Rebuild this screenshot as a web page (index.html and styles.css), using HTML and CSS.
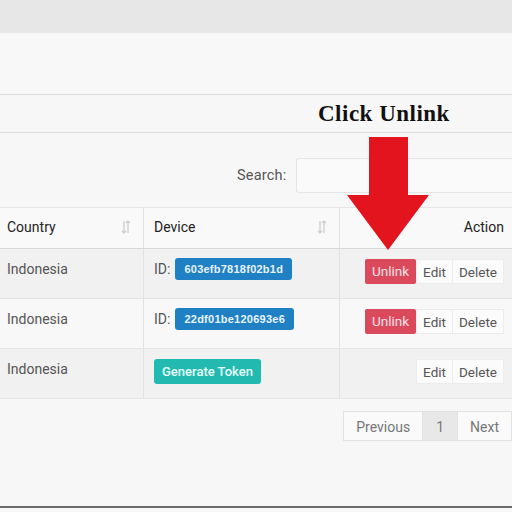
FILE: index.html
```html
<!DOCTYPE html>
<html>
<head>
<meta charset="utf-8">
<link rel="stylesheet" href="styles.css">
</head>
<body>
<div class="topbar"></div>
<div class="panel"></div>
<div class="caption"><span class="caption-text">Click Unlink</span></div>
<div class="search-row">
  <label class="search-label">Search:</label>
  <div class="search-input"></div>
</div>
<table class="grid">
  <thead>
    <tr>
      <th class="col-country"><div class="th-inner">Country <svg class="sort" viewBox="0 0 10 14" width="10" height="14"><path d="M3 1v12M1 11l2 2 2-2M7 13V1M5 3l2-2 2 2" fill="none" stroke="#d0d0d0" stroke-width="1.4"/></svg></div></th>
      <th class="col-device"><div class="th-inner">Device <svg class="sort" viewBox="0 0 10 14" width="10" height="14"><path d="M3 1v12M1 11l2 2 2-2M7 13V1M5 3l2-2 2 2" fill="none" stroke="#d0d0d0" stroke-width="1.4"/></svg></div></th>
      <th class="col-action"><div class="th-action">Action</div></th>
    </tr>
  </thead>
  <tbody>
    <tr class="odd">
      <td>Indonesia</td>
      <td><span class="id-label">ID:</span><span class="badge">603efb7818f02b1d</span></td>
      <td class="actions"><div class="btns"><span class="btn btn-red">Unlink</span><span class="btn-group"><span class="btn btn-light">Edit</span><span class="btn btn-light">Delete</span></span></div></td>
    </tr>
    <tr class="even">
      <td>Indonesia</td>
      <td><span class="id-label">ID:</span><span class="badge">22df01be120693e6</span></td>
      <td class="actions"><div class="btns"><span class="btn btn-red">Unlink</span><span class="btn-group"><span class="btn btn-light">Edit</span><span class="btn btn-light">Delete</span></span></div></td>
    </tr>
    <tr class="odd">
      <td>Indonesia</td>
      <td><span class="btn-teal">Generate Token</span></td>
      <td class="actions"><div class="btns"><span class="btn-group"><span class="btn btn-light">Edit</span><span class="btn btn-light">Delete</span></span></div></td>
    </tr>
  </tbody>
</table>
<div class="pager">
  <span class="page">Previous</span><span class="page page-current">1</span><span class="page">Next</span>
</div>
<div class="footer-line"></div>
<svg class="arrow" viewBox="0 0 82 113" width="82" height="113"><polygon points="22,0 61,0 61,58 82,58 41,113 0,58 22,58" fill="#e3141e"/></svg>
</body>
</html>
```
FILE: styles.css
```css
html, body {
  margin: 0;
  padding: 0;
}
body {
  width: 512px;
  height: 512px;
  overflow: hidden;
  background: #f7f7f7;
  font-family: Roboto, "Liberation Sans", sans-serif;
  color: #444;
  position: relative;
}
.topbar {
  height: 33px;
  background: #e7e7e7;
}
.panel {
  height: 61px;
  background: #f8f8f8;
  border-bottom: 1px solid #dcdcdc;
}
.caption {
  height: 37px;
  border-bottom: 1px solid #dcdcdc;
  display: flex;
  align-items: center;
  padding-left: 318px;
}
.caption-text {
  font-family: "Liberation Serif", "DejaVu Serif", serif;
  font-weight: bold;
  font-size: 23px;
  letter-spacing: 0.5px;
  color: #111;
  margin-top: 1px;
}
.search-row {
  height: 74px;
  display: flex;
  align-items: flex-start;
  padding-top: 25px;
  box-sizing: border-box;
}
.search-label {
  margin-left: 237px;
  width: 59px;
  line-height: 35px;
  font-size: 14.5px;
  letter-spacing: 0.2px;
  color: #555;
}
.search-input {
  flex: 1;
  height: 33px;
  background: #fafafa;
  border: 1px solid #e4e4e4;
  border-right: none;
  border-radius: 3px 0 0 3px;
}
.grid {
  width: 512px;
  border-collapse: collapse;
  font-size: 14px;
}
.grid th {
  height: 40px;
  padding: 0;
  background: #f9f9f9;
  font-weight: 400;
  color: #222;
  text-align: left;
  border-bottom: 1px solid #d8d8d8;
  border-top: 1px solid #e6e6e6;
}
.col-country { width: 143px; border-right: 1px solid #e2e2e2; }
.col-device { width: 195px; border-right: 1px solid #e2e2e2; }
.th-inner {
  display: flex;
  justify-content: space-between;
  align-items: center;
  padding: 0 12px 0 7px;
  margin-top: -2px;
}
.col-device .th-inner { padding-left: 10px; }
.sort { display: block; }
.th-action {
  text-align: right;
  padding-right: 8px;
  margin-top: -2px;
}
.grid td {
  height: 50px;
  padding: 9px 0 0 7px;
  box-sizing: border-box;
  vertical-align: top;
  color: #555;
  line-height: 22px;
  border-bottom: 1px solid #e4e4e4;
}
.grid td + td { border-left: 1px solid #e2e2e2; padding-left: 10px; }
.grid tr.odd td { background: #f1f1f1; }
.grid tr.even td { background: #f8f8f8; }
.id-label {
  color: #555;
  margin-right: 5px;
}
.badge {
  display: inline-block;
  height: 22px;
  line-height: 22px;
  padding: 0 9px;
  background: #1f80c4;
  color: #e8f4ff;
  font-family: "Liberation Sans", Arial, sans-serif;
  font-weight: bold;
  font-size: 11px;
  letter-spacing: 0.25px;
  border-radius: 3px;
  vertical-align: top;
}
.btn-teal {
  display: inline-block;
  height: 25px;
  line-height: 25px;
  padding: 0 8px;
  background: #22bab0;
  color: #e9fffb;
  font-size: 13px;
  font-weight: 500;
  border-radius: 3px;
  margin-top: 1px;
}
.grid td.actions { padding-right: 8px; padding-left: 0; }
.btns {
  display: flex;
  justify-content: flex-end;
  align-items: center;
  margin-top: 1px;
}
.btn {
  display: inline-block;
  height: 25px;
  line-height: 25px;
  font-size: 13.5px;
  padding: 0 6px;
  box-sizing: border-box;
}
.btn-red {
  background: #db4a5c;
  color: #ffe3e7;
  border-radius: 2px;
  width: 51px;
  text-align: center;
}
.btn-group {
  display: flex;
  background: #fbfbfb;
}
.btn-light {
  color: #555;
  border: 1px solid #ececec;
}
.btn-light + .btn-light { border-left: none; }
.pager {
  display: flex;
  justify-content: flex-end;
  margin-top: 12px;
  height: 30px;
}
.page {
  height: 30px;
  line-height: 30px;
  box-sizing: border-box;
  border: 1px solid #e2e2e2;
  background: #fafafa;
  color: #777;
  font-size: 14px;
  padding: 0 12px;
}
.page + .page { border-left: none; }
.page-current {
  background: #e8e8e8;
  padding: 0 13px;
}
.footer-line {
  margin-top: 65px;
  height: 2px;
  background: #6a6a6a;
}
.arrow {
  position: absolute;
  left: 347px;
  top: 137px;
}
```
